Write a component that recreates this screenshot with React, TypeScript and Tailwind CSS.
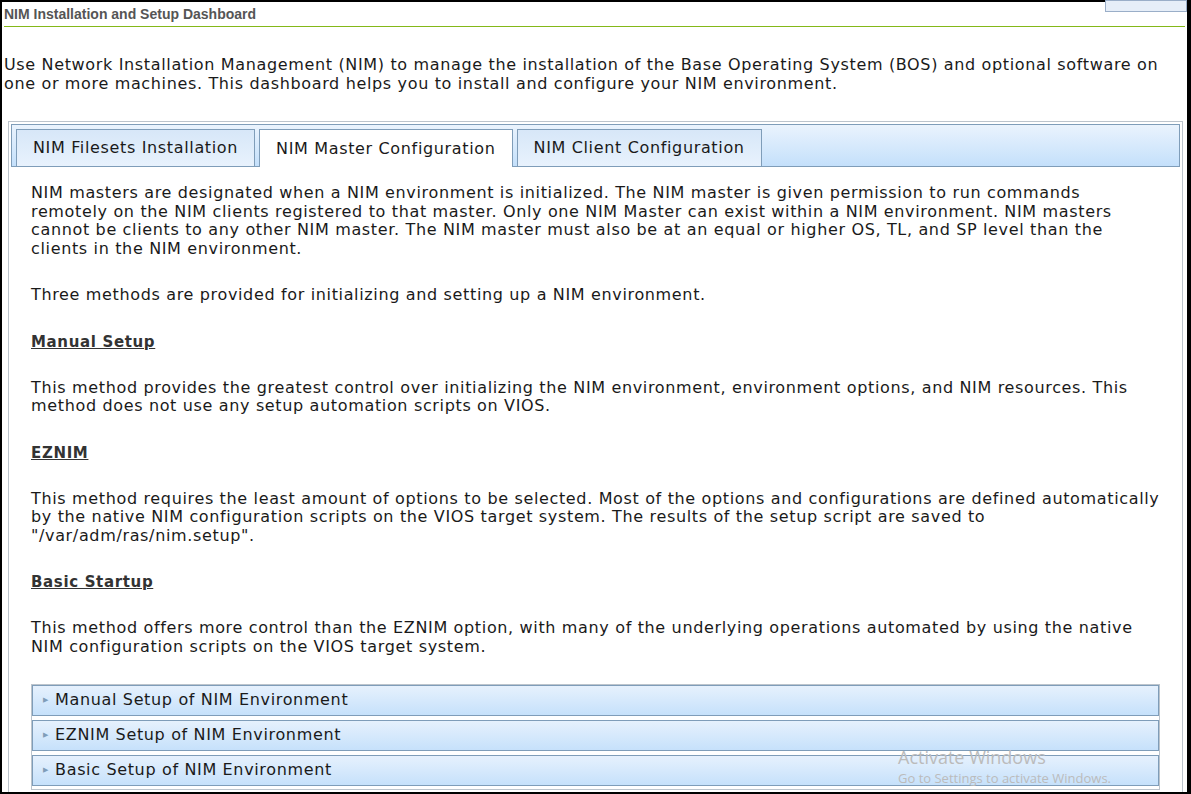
export default function App() {
  const f = { fontFamily: '"DejaVu Sans", Verdana, sans-serif' };
  const tabs = ["NIM Filesets Installation", "NIM Master Configuration", "NIM Client Configuration"];
  const acc = ["Manual Setup of NIM Environment", "EZNIM Setup of NIM Environment", "Basic Setup of NIM Environment"];
  const h = "mt-[28px] font-bold underline text-[#333] text-[15px] leading-[18px]";
  return (
    <div className="w-[1191px] h-[794px] bg-black p-[2px] pr-[4px] overflow-hidden">
      <div className="relative w-full h-full bg-white flex flex-col text-[#1a1a1a]" style={f}>
        <div className="absolute right-[0px] -top-[2px] w-[82px] h-[12px] border border-[#9aaec8] bg-[#e6eef8]" />
        <div className="h-[30px] mx-[2px] flex items-center border-b border-[#84b818] text-[14px] font-bold text-[#555]" style={{ fontFamily: '"Liberation Sans", Arial, sans-serif' }}>
          NIM Installation and Setup Dashboard
        </div>
        <p className="mt-[28px] px-[2px] text-[16px] leading-[19px] tracking-[0.65px]">
          Use Network Installation Management (NIM) to manage the installation of the Base Operating System (BOS) and optional software on one or more machines. This dashboard helps you to install and configure your NIM environment.
        </p>
        <div className="mt-[28px] ml-[6px] mr-[4px] flex-1 border border-[#bcc4cc] border-b-0 p-[2px] flex flex-col">
          <div className="h-[43px] border border-[#7f9db9] bg-gradient-to-b from-[#eaf3fd] to-[#c4e0fb] flex items-end gap-[4px] pl-[4px]">
            {tabs.map((t, i) => (
              <div key={t} className={`h-[37px] px-[16px] flex items-center text-[16px] tracking-[0.65px] border border-b-0 border-[#7f9db9] ${i === 1 ? "bg-white h-[38px] -mb-px" : "bg-gradient-to-b from-[#d7e7f8] to-[#e8f2fd]"}`}>
                {t}
              </div>
            ))}
          </div>
          <div className="px-[20px] pt-[17px] text-[16px] leading-[18.5px] tracking-[0.65px]">
            <p>NIM masters are designated when a NIM environment is initialized. The NIM master is given permission to run commands remotely on the NIM clients registered to that master. Only one NIM Master can exist within a NIM environment. NIM masters cannot be clients to any other NIM master. The NIM master must also be at an equal or higher OS, TL, and SP level than the clients in the NIM environment.</p>
            <p className="mt-[28px]">Three methods are provided for initializing and setting up a NIM environment.</p>
            <p className={h}>Manual Setup</p>
            <p className="mt-[28px]">This method provides the greatest control over initializing the NIM environment, environment options, and NIM resources. This method does not use any setup automation scripts on VIOS.</p>
            <p className={h}>EZNIM</p>
            <p className="mt-[28px]">This method requires the least amount of options to be selected. Most of the options and configurations are defined automatically by the native NIM configuration scripts on the VIOS target system. The results of the setup script are saved to "/var/adm/ras/nim.setup".</p>
            <p className={h}>Basic Startup</p>
            <p className="mt-[28px]">This method offers more control than the EZNIM option, with many of the underlying operations automated by using the native NIM configuration scripts on the VIOS target system.</p>
            <div className="mt-[28px] border border-[#bcc4cc] flex flex-col gap-[4px] pb-[3px]">
              {acc.map((a) => (
                <div key={a} className="h-[31px] border border-[#7f9db9] bg-gradient-to-b from-[#e6f1fd] to-[#c6e1fb] flex items-center pl-[10px] gap-[6px] text-[16px]">
                  <span className="text-[7px] text-[#7f9db9]">▶</span>
                  {a}
                </div>
              ))}
            </div>
          </div>
        </div>
        <div className="absolute left-[896px] top-[743px] text-[#bbb]" style={{ fontFamily: '"Open Sans", sans-serif' }}>
          <div className="text-[18px] leading-[24px]">Activate Windows</div>
          <div className="text-[13px] leading-[18px]">Go to Settings to activate Windows.</div>
        </div>
      </div>
    </div>
  );
}
